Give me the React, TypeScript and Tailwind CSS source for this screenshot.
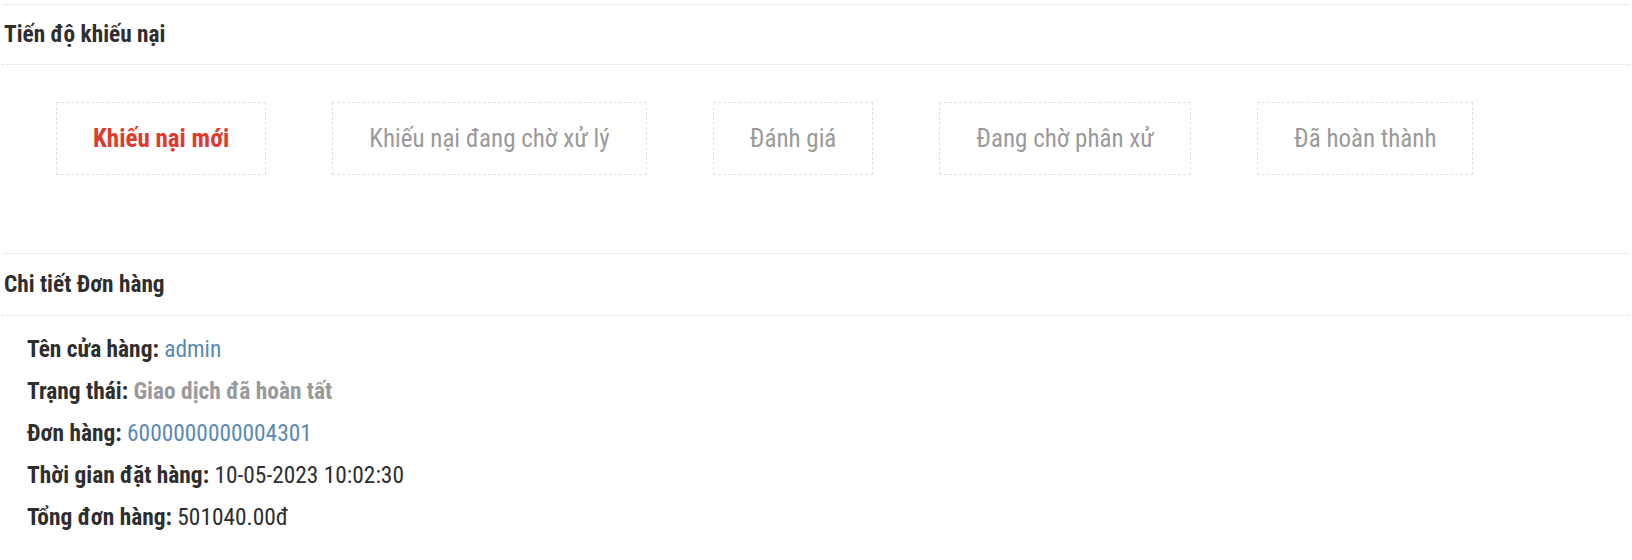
const steps = [
  { label: 'Khiếu nại mới', active: true },
  { label: 'Khiếu nại đang chờ xử lý' },
  { label: 'Đánh giá' },
  { label: 'Đang chờ phân xử' },
  { label: 'Đã hoàn thành' },
];

const SectionTitle = ({ children, tall }: { children: React.ReactNode; tall?: boolean }) => (
  <div className="border-t border-[#e4ecf0] mx-[2px]">
    <div
      className={`${tall ? 'h-[62px]' : 'h-[60px]'} flex items-center px-[2px] border-b border-dotted border-[#cfdde3]`}
    >
      <h2 className="text-[23.3px] font-bold text-[#2e2e2e] leading-none">{children}</h2>
    </div>
  </div>
);

export default function App() {
  return (
    <div
      className="min-h-screen bg-white pt-[4px]"
      style={{ fontFamily: 'Roboto, "Liberation Sans", sans-serif', fontStretch: 'condensed' }}
    >
      <SectionTitle>Tiến độ khiếu nại</SectionTitle>

      <div className="flex gap-[66px] pl-[56px] pt-[37px] pb-[78px]">
        {steps.map((s) => (
          <div
            key={s.label}
            className="h-[73px] px-[36px] flex items-center border border-dashed border-[#e2e2e2]"
          >
            <span
              className={
                s.active
                  ? 'text-[25px] font-bold text-[#df3a2f]'
                  : 'text-[25px] text-[#9a9a9a]'
              }
            >
              {s.label}
            </span>
          </div>
        ))}
      </div>

      <SectionTitle tall>Chi tiết Đơn hàng</SectionTitle>

      <div className="pl-[27px] pt-[21px] flex flex-col gap-[18px] text-[23.4px] leading-[24px] text-[#2e2e2e]">
        <p>
          <b>Tên cửa hàng:</b> <span className="text-[#5a89b2]">admin</span>
        </p>
        <p>
          <b>Trạng thái:</b> <span className="font-bold text-[#9a9a9a]">Giao dịch đã hoàn tất</span>
        </p>
        <p>
          <b>Đơn hàng:</b> <span className="text-[#5a89b2]">6000000000004301</span>
        </p>
        <p>
          <b>Thời gian đặt hàng:</b> 10-05-2023 10:02:30
        </p>
        <p>
          <b>Tổng đơn hàng:</b> 501040.00đ
        </p>
      </div>
    </div>
  );
}
